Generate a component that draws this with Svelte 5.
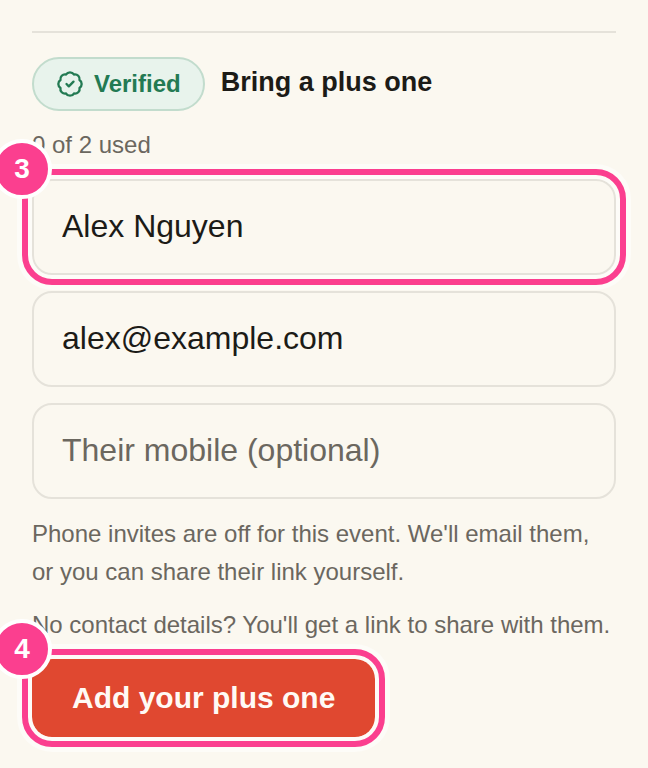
<script lang="ts">
	let { used = 0, limit = 2 } = $props();

	let name = $state('Alex Nguyen');
	let email = $state('alex@example.com');
	let mobile = $state('');
</script>

<section class="plus-one">
	<header class="plus-one-header">
		<span class="status">
			<svg class="status-icon" viewBox="0 0 24 24" aria-hidden="true">
				<path
					d="M3.85 8.62a4 4 0 0 1 4.78-4.77 4 4 0 0 1 6.74 0 4 4 0 0 1 4.78 4.78 4 4 0 0 1 0 6.74 4 4 0 0 1-4.77 4.78 4 4 0 0 1-6.75 0 4 4 0 0 1-4.78-4.77 4 4 0 0 1 0-6.76Z"
				/>
				<path d="m9 12 2 2 4-4" />
			</svg>
			Verified
		</span>
		<h2 class="title">Bring a plus one</h2>
	</header>

	<p class="usage">{used} of {limit} used</p>

	<form class="guest-form" onsubmit={(e) => e.preventDefault()}>
		<div class="callout">
			<input class="field" type="text" aria-label="Their name" bind:value={name} />
			<span class="callout-ring"></span>
			<span class="callout-number">3</span>
		</div>
		<input class="field" type="email" aria-label="Their email" bind:value={email} />
		<input
			class="field"
			type="tel"
			aria-label="Their mobile (optional)"
			placeholder="Their mobile (optional)"
			bind:value={mobile}
		/>

		<p class="note">
			Phone invites are off for this event. We'll email them, or you can share their link yourself.
		</p>
		<p class="hint">No contact details? You'll get a link to share with them.</p>

		<div class="callout callout-fit">
			<button class="submit" type="submit">Add your plus one</button>
			<span class="callout-ring"></span>
			<span class="callout-number">4</span>
		</div>
	</form>
</section>

<style>
	:global(body) {
		background: #fbf8f0;
		overflow-x: hidden;
	}

	.plus-one {
		--color-text: #1c1b17;
		--color-muted: #6b675f;
		--color-line: #e5e2da;
		--color-callout: #fb3f8f;
		margin: 31px 32px;
		padding-top: 24px;
		border-top: 2px solid var(--color-line);
		display: flex;
		flex-direction: column;
		gap: 16px;
		color: var(--color-text);
		font-family: 'Liberation Sans', Arial, sans-serif;
		font-size: 24px;
		line-height: 36px;
	}

	.plus-one-header {
		display: flex;
		align-items: center;
		gap: 16px;
	}

	.status {
		display: flex;
		align-items: center;
		gap: 10px;
		box-sizing: border-box;
		height: 54px;
		padding: 0 22px;
		border: 2px solid #c2dccd;
		border-radius: 27px;
		background: #e8f3ec;
		color: #237a53;
		font-weight: 700;
	}

	.status-icon {
		width: 28px;
		height: 28px;
		fill: none;
		stroke: currentColor;
		stroke-width: 2;
		stroke-linecap: round;
		stroke-linejoin: round;
	}

	.title {
		margin: 0;
		padding-bottom: 4px;
		font-size: 27px;
		font-weight: 700;
	}

	.usage,
	.note,
	.hint {
		margin: 0;
		color: var(--color-muted);
	}

	.note {
		line-height: 38px;
	}

	.guest-form {
		display: flex;
		flex-direction: column;
		gap: 16px;
	}

	.field {
		display: block;
		box-sizing: border-box;
		width: 100%;
		height: 96px;
		padding: 0 28px 2px;
		border: 2px solid var(--color-line);
		border-radius: 20px;
		background: transparent;
		color: var(--color-text);
		font: inherit;
		font-size: 32px;
	}

	.field::placeholder {
		color: var(--color-muted);
		opacity: 1;
	}

	.submit {
		display: block;
		height: 78px;
		padding: 0 40px;
		border: 0;
		border-radius: 20px;
		background: #e04830;
		color: #fffaf5;
		font: inherit;
		font-size: 30px;
		font-weight: 700;
		cursor: pointer;
	}

	/* Numbered callouts sit over the control they point at */
	.callout {
		position: relative;
	}

	.callout-fit {
		align-self: flex-start;
	}

	.callout-ring {
		position: absolute;
		inset: -10px;
		border: 6px solid var(--color-callout);
		border-radius: 30px;
		box-shadow:
			0 0 0 5px rgba(255, 255, 255, 0.5),
			inset 0 0 0 4px rgba(255, 255, 255, 0.5);
		pointer-events: none;
	}

	.callout-number {
		position: absolute;
		top: -40px;
		left: -40px;
		box-sizing: border-box;
		width: 60px;
		height: 60px;
		border: 4px solid #fff;
		border-radius: 50%;
		background: var(--color-callout);
		color: #fff;
		font-size: 28px;
		font-weight: 700;
		line-height: 52px;
		text-align: center;
	}
</style>
